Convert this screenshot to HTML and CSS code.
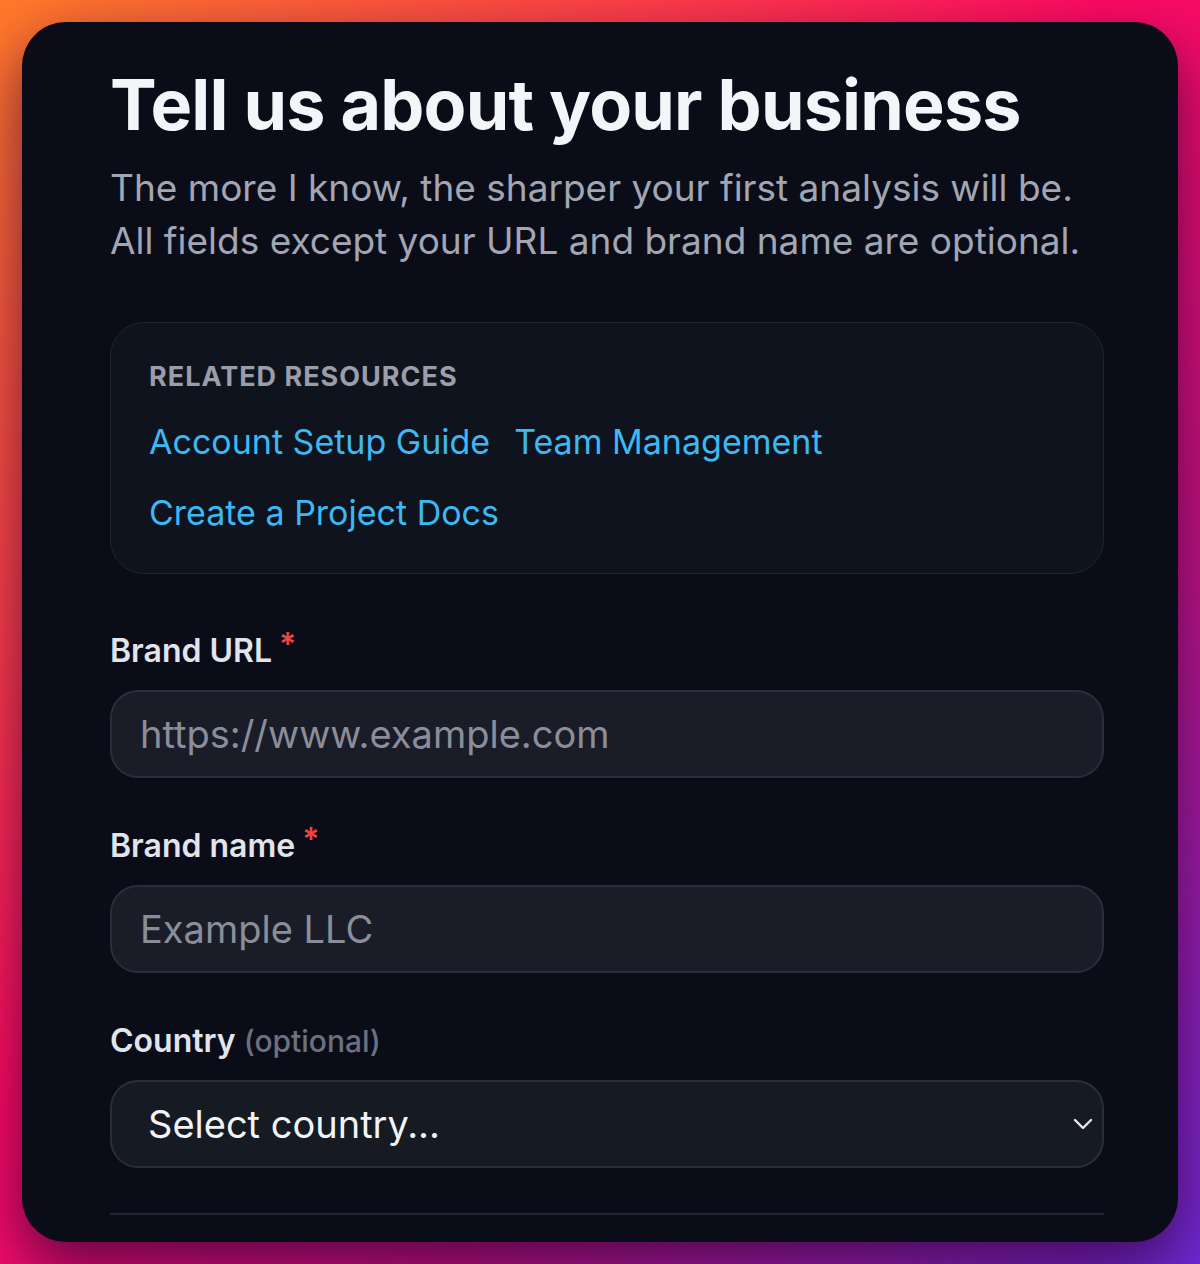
FILE: index.html
```html
<!DOCTYPE html>
<html lang="en">

<head>
    <meta charset="UTF-8">
    <title>Tell us about your business</title>
    <meta name="viewport" content="width=device-width, initial-scale=1.0">
    <link rel="stylesheet" href="styles.css">
</head>

<body>
    <div class="card">
        <h1 class="title">Tell us about your business</h1>
        <p class="lead">The more I know, the sharper your first analysis will be. All fields except your URL and brand name are optional.</p>

        <!-- related resources -->
        <div class="resources">
            <div class="res_head">RELATED RESOURCES</div>
            <div class="res_links">
                <a href="#">Account Setup Guide</a>
                <a href="#">Team Management</a>
                <a href="#">Create a Project Docs</a>
            </div>
        </div>

        <!-- fields -->
        <div class="field">
            <label for="url">Brand URL<span class="req">*</span></label>
            <input type="text" id="url" class="inp" placeholder="https://www.example.com">
        </div>
        <div class="field">
            <label for="name">Brand name<span class="req">*</span></label>
            <input type="text" id="name" class="inp" placeholder="Example LLC">
        </div>
        <div class="field">
            <label for="country">Country <span class="opt">(optional)</span></label>
            <div class="sel">
                <span>Select country...</span>
                <svg width="22" height="14" viewBox="0 0 22 14">
                    <path d="M3 3 L11 11 L19 3" fill="none" stroke="#e8e9ee" stroke-width="2.4" stroke-linecap="round" stroke-linejoin="round" />
                </svg>
            </div>
        </div>
        <div class="divider"></div>
    </div>
</body>

</html>
```

FILE: styles.css
```css
html,
body {
    margin: 0;
    height: 1264px;
    overflow: hidden;
}

body {
    font-family: Inter, "Noto Sans", sans-serif;
    background: linear-gradient(135deg, #ff7a2a 0%, #ff3a4a 28%, #ff0a62 45%, #c5127f 70%, #6d2ad6 100%);
}

.card {
    margin: 22px;
    height: 1220px;
    box-sizing: border-box;
    padding: 44px 74px 0 88px;
    background-color: #0a0d18;
    border-radius: 44px;
    box-shadow: 0 24px 60px rgba(40, 0, 50, 0.7);
    overflow: hidden;
}

.title {
    margin: 0;
    font-size: 70px;
    font-weight: 700;
    line-height: 1.1;
    letter-spacing: -0.8px;
    color: #f4f5f8;
}

.lead {
    margin: 18px 0 0;
    font-size: 37px;
    line-height: 53px;
    color: #a2a6b4;
}

.resources {
    margin-top: 55px;
    margin-bottom: 57px;
    padding: 37px 38px 37px;
    border: 1px solid #20242f;
    border-radius: 34px;
    background-color: #0f131d;
}

.res_head {
    font-size: 27px;
    font-weight: 700;
    letter-spacing: 1px;
    color: #9b9ea9;
}

.res_links {
    display: flex;
    flex-wrap: wrap;
    column-gap: 24px;
    row-gap: 24px;
    margin-top: 25px;
}

.res_links a {
    font-size: 34px;
    line-height: 47px;
    color: #3db8f2;
    text-decoration: none;
}

.field {
    margin-top: 48px;
}

.field label {
    display: block;
    font-size: 32px;
    font-weight: 600;
    color: #e2e4eb;
    margin-bottom: 20px;
}

.req {
    margin-left: 7px;
    line-height: 0;
    color: #ef4444;
    font-size: 32px;
    vertical-align: 6px;
}

.opt {
    font-size: 30px;
    font-weight: 500;
    color: #6c7080;
}

.inp {
    display: block;
    width: 100%;
    height: 88px;
    box-sizing: border-box;
    padding: 0 28px;
    font-family: inherit;
    font-size: 38px;
    color: #e2e4eb;
    background-color: #1a1d28;
    border: 2px solid #2a2e3a;
    border-radius: 28px;
    outline: none;
}

.inp::placeholder {
    color: #8a8e9b;
}

.sel {
    display: flex;
    align-items: center;
    justify-content: space-between;
    height: 88px;
    box-sizing: border-box;
    padding: 0 8px 0 36px;
    font-size: 38px;
    color: #f2f3f6;
    background-color: #161a22;
    border: 2px solid #2a2e38;
    border-radius: 28px;
}

.divider {
    margin-top: 45px;
    height: 2px;
    background-color: #232733;
}
```
